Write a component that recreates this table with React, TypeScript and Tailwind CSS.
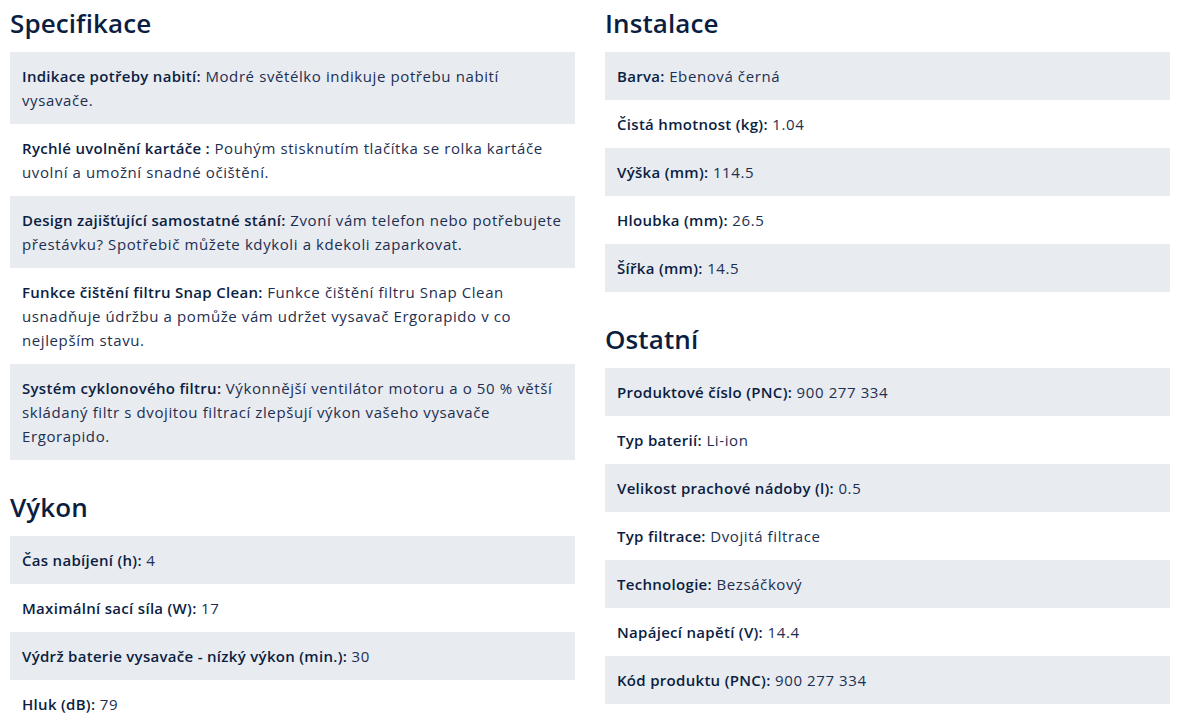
import React from 'react'

type Spec = { label: string; value: string }
type Section = { title: string; rows: Spec[] }

const leftSections: Section[] = [
  {
    title: 'Specifikace',
    rows: [
      { label: 'Indikace potřeby nabití:', value: 'Modré světélko indikuje potřebu nabití vysavače.' },
      { label: 'Rychlé uvolnění kartáče :', value: 'Pouhým stisknutím tlačítka se rolka kartáče uvolní a umožní snadné očištění.' },
      { label: 'Design zajišťující samostatné stání:', value: 'Zvoní vám telefon nebo potřebujete přestávku? Spotřebič můžete kdykoli a kdekoli zaparkovat.' },
      { label: 'Funkce čištění filtru Snap Clean:', value: 'Funkce čištění filtru Snap Clean usnadňuje údržbu a pomůže vám udržet vysavač Ergorapido v co nejlepším stavu.' },
      { label: 'Systém cyklonového filtru:', value: 'Výkonnější ventilátor motoru a o 50 % větší skládaný filtr s dvojitou filtrací zlepšují výkon vašeho vysavače Ergorapido.' },
    ],
  },
  {
    title: 'Výkon',
    rows: [
      { label: 'Čas nabíjení (h):', value: '4' },
      { label: 'Maximální sací síla (W):', value: '17' },
      { label: 'Výdrž baterie vysavače - nízký výkon (min.):', value: '30' },
      { label: 'Hluk (dB):', value: '79' },
    ],
  },
]

const rightSections: Section[] = [
  {
    title: 'Instalace',
    rows: [
      { label: 'Barva:', value: 'Ebenová černá' },
      { label: 'Čistá hmotnost (kg):', value: '1.04' },
      { label: 'Výška (mm):', value: '114.5' },
      { label: 'Hloubka (mm):', value: '26.5' },
      { label: 'Šířka (mm):', value: '14.5' },
    ],
  },
  {
    title: 'Ostatní',
    rows: [
      { label: 'Produktové číslo (PNC):', value: '900 277 334' },
      { label: 'Typ baterií:', value: 'Li-ion' },
      { label: 'Velikost prachové nádoby (l):', value: '0.5' },
      { label: 'Typ filtrace:', value: 'Dvojitá filtrace' },
      { label: 'Technologie:', value: 'Bezsáčkový' },
      { label: 'Napájecí napětí (V):', value: '14.4' },
      { label: 'Kód produktu (PNC):', value: '900 277 334' },
    ],
  },
]

function SpecSection({ section }: { section: Section }) {
  return (
    <div>
      <h2 className="h-[52px] text-[26px] leading-[46px] font-semibold tracking-[0.1px]">{section.title}</h2>
      <div>
        {section.rows.map((row, i) => (
          <p
            key={row.label}
            className={`px-3 py-3 text-[15px] leading-6 tracking-[0.6px] ${i % 2 === 0 ? 'bg-[#e8ebf0]' : ''}`}
          >
            <span className="font-semibold tracking-[0.3px]">{row.label}</span>{' '}
            <span className="text-[#1d2f52]">{row.value}</span>
          </p>
        ))}
      </div>
    </div>
  )
}

export default function App() {
  return (
    <div
      className="min-h-screen bg-white text-[#0b1e42] pl-[10px] pr-[11px]"
      style={{ fontFamily: '"Open Sans", Lato, sans-serif' }}
    >
      <div className="grid grid-cols-2 gap-[30px]">
        <div className="flex flex-col gap-6">
          {leftSections.map(s => (
            <SpecSection key={s.title} section={s} />
          ))}
        </div>
        <div className="flex flex-col gap-6">
          {rightSections.map(s => (
            <SpecSection key={s.title} section={s} />
          ))}
        </div>
      </div>
    </div>
  )
}
